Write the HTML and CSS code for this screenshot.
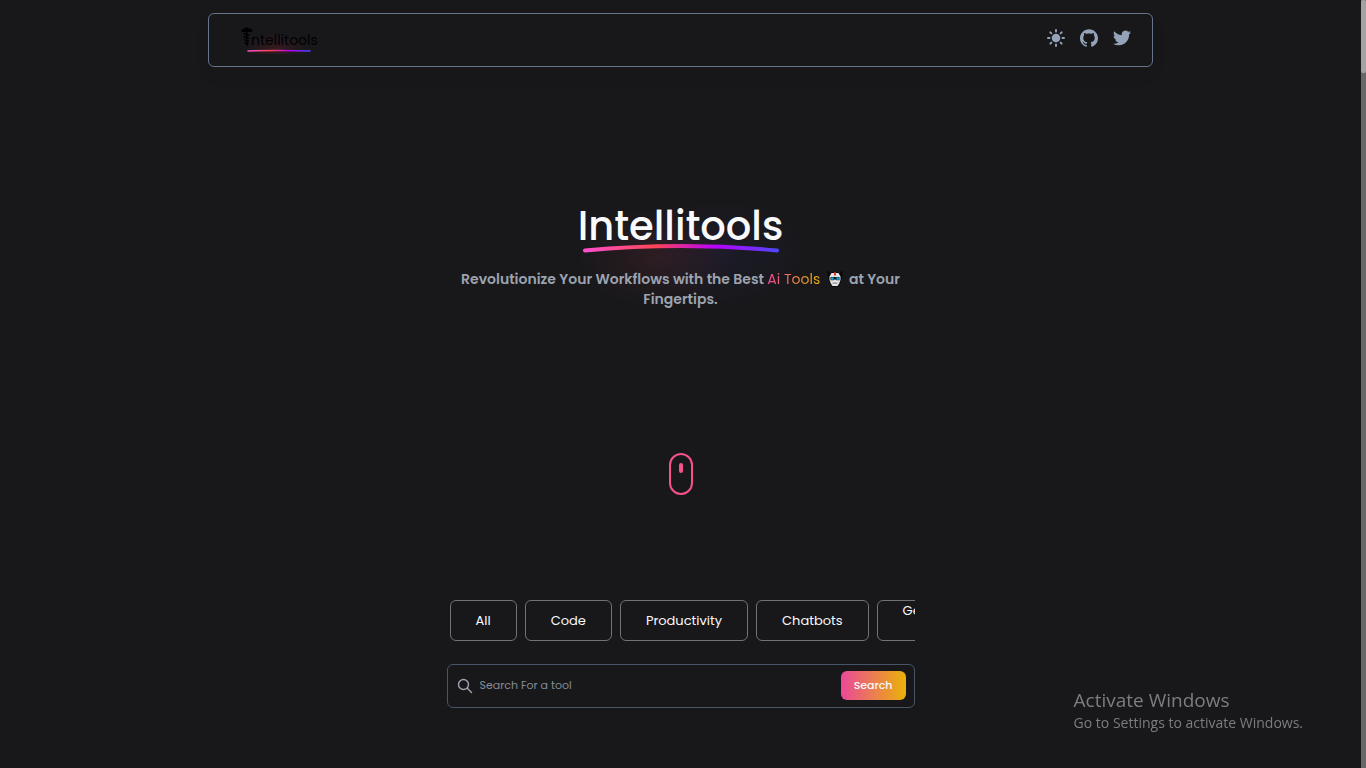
FILE: index.html
```html
<!DOCTYPE html>
<html lang="en">
<head>
    <meta charset="UTF-8">
    <meta name="viewport" content="width=device-width, initial-scale=1.0">
    <title>Intellitools</title>
    <link rel="stylesheet" href="styles.css">
</head>
<body>
    <div class="page">
        <header class="navbar">
            <a class="logo" href="#">
                <span class="logo-row">
                    <svg class="logo-mark" viewBox="0 0 12 20" aria-hidden="true">
                        <path d="M0 4.500C.5 2.500 2 1.500 3.500 1.800 4.500.3 7 0 8 1.500 10 1.200 11.500 2.500 12 4.500L8 5H2z"/>
                        <path d="M2.500 6l6 1.500V9l-6-1.500zM2.500 9l6 1.500V12l-6-1.500zM3 12l5 1.500V15l-5-1.500zM3.500 15l4 1v1.500l-4-1zM5 17.500l2 .5-.5 1.500z"/>
                        <path d="M5 5h1.500v13H5z"/>
                    </svg>
                    <span>ntellitools</span>
                </span>
                <svg class="logo-line" viewBox="0 0 64 3" preserveAspectRatio="none" aria-hidden="true">
                    <path d="M1 2Q32 1 63 2" fill="none" stroke="url(#rainbow)" stroke-width="1.500" stroke-linecap="round"/>
                </svg>
            </a>
            <nav class="nav-icons">
                <button class="icon-button" type="button" aria-label="Toggle theme">
                    <svg viewBox="0 0 18 18">
                        <circle cx="9" cy="9" r="4.300" fill="currentColor"/>
                        <path d="M9 1v1.500M9 15.500V17M1 9h1.500M15.500 9H17M3.300 3.300l1.100 1.100M13.600 13.600l1.100 1.100M3.300 14.700l1.100-1.100M13.600 4.400l1.100-1.100" stroke="currentColor" stroke-width="1.900" stroke-linecap="round"/>
                    </svg>
                </button>
                <a class="icon-button" href="#" aria-label="GitHub">
                    <svg viewBox="0 0 24 24" fill="currentColor"><path d="M12 .297c-6.630 0-12 5.373-12 12 0 5.303 3.438 9.800 8.205 11.385.6.113.82-.258.82-.577 0-.285-.01-1.040-.015-2.040-3.338.724-4.042-1.610-4.042-1.610C4.422 18.070 3.633 17.700 3.633 17.700c-1.087-.744.084-.729.084-.729 1.205.084 1.838 1.236 1.838 1.236 1.070 1.835 2.809 1.305 3.495.998.108-.776.417-1.305.76-1.605-2.665-.3-5.466-1.332-5.466-5.930 0-1.310.465-2.380 1.235-3.220-.135-.303-.54-1.523.105-3.176 0 0 1.005-.322 3.300 1.230.96-.267 1.980-.399 3-.405 1.020.006 2.040.138 3 .405 2.280-1.552 3.285-1.230 3.285-1.230.645 1.653.24 2.873.12 3.176.765.84 1.230 1.910 1.230 3.220 0 4.610-2.805 5.625-5.475 5.920.42.36.81 1.096.81 2.220 0 1.606-.015 2.896-.015 3.286 0 .315.21.69.825.57C20.565 22.092 24 17.592 24 12.297c0-6.627-5.373-12-12-12"/></svg>
                </a>
                <a class="icon-button" href="#" aria-label="Twitter">
                    <svg viewBox="0 0 24 24" fill="currentColor"><path d="M23.953 4.570a10 10 0 01-2.825.775 4.958 4.958 0 002.163-2.723c-.951.555-2.005.959-3.127 1.184a4.920 4.920 0 00-8.384 4.482C7.690 8.095 4.067 6.130 1.640 3.162a4.822 4.822 0 00-.666 2.475c0 1.710.87 3.213 2.188 4.096a4.904 4.904 0 01-2.228-.616v.06a4.923 4.923 0 003.946 4.827 4.996 4.996 0 01-2.212.085 4.936 4.936 0 004.604 3.417 9.867 9.867 0 01-6.102 2.105c-.39 0-.779-.023-1.170-.067a13.995 13.995 0 007.557 2.209c9.053 0 13.998-7.496 13.998-13.985 0-.21 0-.42-.015-.63A9.935 9.935 0 0024 4.590z"/></svg>
                </a>
            </nav>
        </header>

        <main class="content">
            <section class="hero">
                <h1 class="title">Intellitools</h1>
                <svg class="title-line" viewBox="0 0 196 10" aria-hidden="true">
                    <defs>
                        <linearGradient id="rainbow" gradientUnits="objectBoundingBox" x1="0" x2="1" y1="0" y2="0">
                            <stop offset="0" stop-color="#ff4ecd"/>
                            <stop offset=".36" stop-color="#ff4655"/>
                            <stop offset=".68" stop-color="#b800ff"/>
                            <stop offset="1" stop-color="#5046ff"/>
                        </linearGradient>
                    </defs>
                    <path d="M2 7.500Q98-1.500 194 7.500" fill="none" stroke="url(#rainbow)" stroke-width="4" stroke-linecap="round"/>
                </svg>
                <p class="tagline">
                    Revolutionize Your Workflows with the Best <span class="highlight">Ai Tools</span>
                    <svg class="robot" viewBox="0 0 16 16" role="img" aria-label="robot">
                        <path d="M.5 0L2 .5l1 2.500L5 1.300h6L13 3l1-2.500L15.500 0l-.3 6-.9 2-.8 4-2.500 3.500H5L2.500 12l-.8-4-.9-2z" fill="#050505"/>
                        <path d="M2.500 5.500L4.500 2h7l2 3.500v3.500l-1.300 3.500L10.500 15h-5l-1.700-2.500L2.500 9z" fill="#e4e4e7"/>
                        <path d="M7 1.300h2v3.200H7z" fill="#e3342f"/>
                        <path d="M3.500 6h9v3.300h-3L8.500 8.500h-1L6.500 9.300h-3z" fill="#111827"/>
                        <path d="M4.200 6.500h2.300v2.300H4.200zM9.500 6.500h2.300v2.300H9.500z" fill="#11b5e8"/>
                        <path d="M5.500 11.500h5v1.200h-5z" fill="#8b8b90"/>
                    </svg>
                    at Your Fingertips.
                </p>
            </section>

            <a class="scroll-hint" href="#tools" aria-label="Scroll down"><span class="wheel"></span></a>

            <section class="tools" id="tools">
                <div class="filters">
                    <button class="filter" type="button">All</button>
                    <button class="filter" type="button">Code</button>
                    <button class="filter" type="button">Productivity</button>
                    <button class="filter" type="button">Chatbots</button>
                    <button class="filter" type="button">Generative<br>Art</button>
                </div>
                <form class="search">
                    <label class="search-icon" for="search" aria-label="Search For a tool">
                        <svg viewBox="0 0 16 16" fill="none" stroke="currentColor" stroke-width="1.400" stroke-linecap="round">
                            <circle cx="6.500" cy="6.500" r="5"/>
                            <path d="M10.300 10.300L14.500 14.500"/>
                        </svg>
                    </label>
                    <input class="search-input" id="search" type="text" placeholder="Search For a tool">
                    <button class="search-button" type="submit">Search</button>
                </form>
            </section>
        </main>
    </div>

    <div class="scrollbar"><div class="scrollbar-thumb"></div></div>

    <aside class="watermark">
        <p class="watermark-title">Activate Windows</p>
        <p class="watermark-text">Go to Settings to activate Windows.</p>
    </aside>
</body>
</html>
```
FILE: styles.css
```css
* {
    box-sizing: border-box;
}

body {
    margin: 0;
    display: grid;
    grid-template-columns: 1fr 5px;
    height: 100vh;
    overflow: hidden;
    font-family: Poppins, Inter, sans-serif;
    background-color: #18181b;
    color: #f8fafc;
}

h1, p {
    margin: 0;
}

a {
    color: inherit;
    text-decoration: none;
}

button {
    font: inherit;
    color: inherit;
    border: none;
    background: none;
    padding: 0;
    cursor: pointer;
}

svg {
    display: block;
}

.page {
    display: flex;
    flex-direction: column;
    align-items: center;
    padding-top: 13px;
}

/* navbar */
.navbar {
    display: flex;
    justify-content: space-between;
    align-items: flex-start;
    width: 90%;
    max-width: 945px;
    padding: 12px 21px 12px 32px;
    border: 1px solid #64748b;
    border-radius: 6px;
    box-shadow: 0 8px 16px rgba(0, 0, 0, 0.05);
}

.logo {
    height: 28px;
    color: #000;
    font-size: 14px;
    line-height: 22px;
    background: radial-gradient(ellipse at 45% 85%, rgba(150, 30, 50, 0.25), transparent 50%);
}

.logo-row {
    display: flex;
    align-items: flex-end;
    height: 25px;
}

.logo-mark {
    width: 12px;
    height: 20px;
    margin: 0 -2px 4px 0;
}

.logo-line {
    width: 64px;
    height: 3px;
    margin: -2px 0 0 6px;
}

.nav-icons {
    display: flex;
    gap: 15px;
    padding-top: 3px;
    color: #94a3b8;
}

.icon-button,
.icon-button svg {
    width: 18px;
    height: 18px;
}

/* hero */
.content {
    width: 90%;
    max-width: 468px;
}

.hero {
    display: flex;
    flex-direction: column;
    align-items: center;
    margin-top: 138px;
    background: radial-gradient(ellipse 80px 50px at 45% 50%, rgba(255, 70, 85, 0.09), transparent),
        radial-gradient(ellipse 90px 55px at 58% 45%, rgba(80, 70, 255, 0.06), transparent);
}

.title {
    font-size: 40px;
    line-height: 42px;
    font-weight: 500;
}

.title-line {
    width: 196px;
    height: 10px;
    margin-top: -4px;
}

.tagline {
    margin-top: 16px;
    font-size: 14px;
    line-height: 20px;
    font-weight: 600;
    text-align: center;
    color: #9ca3af;
}

.highlight {
    font-weight: 400;
    background: linear-gradient(to right, #ec4899, #eab308);
    background-clip: text;
    -webkit-background-clip: text;
    color: transparent;
}

.robot {
    display: inline-block;
    width: 16px;
    height: 16px;
    margin: 0 3px;
    vertical-align: -3px;
}

.scroll-hint {
    display: block;
    width: 24px;
    height: 42px;
    margin: 144px auto 0;
    padding-top: 8px;
    border: 2px solid #f6518b;
    border-radius: 12px;
}

.wheel {
    display: block;
    width: 4px;
    height: 10px;
    margin: 0 auto;
    border-radius: 2px;
    background-color: #f6518b;
}

/* filters and search */
.tools {
    margin-top: 105px;
}

.filters {
    display: flex;
    gap: 8px;
    padding-left: 3px;
    overflow: hidden;
}

.filter {
    flex-shrink: 0;
    height: 41px;
    padding: 0 25px;
    border: 1px solid #71717a;
    border-radius: 6px;
    font-size: 13px;
    line-height: 20px;
}

.search {
    display: flex;
    align-items: center;
    height: 44px;
    margin-top: 23px;
    padding: 0 8px 1px 9px;
    border: 1px solid #475569;
    border-radius: 6px;
}

.search-icon {
    color: #9ca3af;
}

.search-icon svg {
    width: 16px;
    height: 16px;
}

.search-input {
    flex: 1;
    min-width: 0;
    padding: 0 7px;
    border: none;
    outline: none;
    background: none;
    font: inherit;
    font-size: 11px;
    color: inherit;
}

.search-input::placeholder {
    color: #858b97;
}

.search-button {
    height: 29px;
    padding: 0 13px;
    border-radius: 6px;
    background: linear-gradient(to right, #ec4899, #eab308);
    font-size: 11px;
    font-weight: 500;
}

/* window chrome */
.scrollbar {
    background-color: #686868;
}

.scrollbar-thumb {
    height: 73px;
    border-radius: 2px;
    background-color: #a3a3a3;
}

.watermark {
    position: fixed;
    right: 63px;
    bottom: 35px;
    font-family: "Segoe UI", "Open Sans", sans-serif;
    color: #7d7d7f;
}

.watermark-title {
    font-size: 19px;
    line-height: 26px;
}

.watermark-text {
    font-size: 14px;
    line-height: 20px;
}
```
